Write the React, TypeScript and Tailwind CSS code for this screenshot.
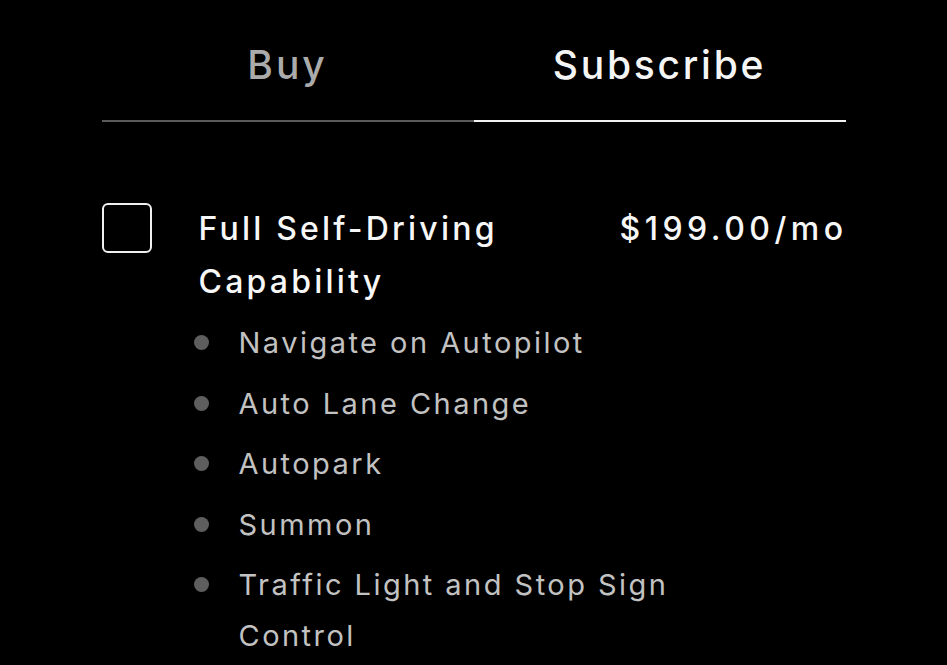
import React from "react";

const features = [
  "Navigate on Autopilot",
  "Auto Lane Change",
  "Autopark",
  "Summon",
  "Traffic Light and Stop Sign Control",
];

export default function App() {
  return (
    <div className="min-h-[665px] w-full bg-black font-['Inter',sans-serif] overflow-hidden">
      <div className="mx-auto w-[744px]">
        <div className="flex pt-[37px]">
          <div className="flex w-1/2 flex-col items-center">
            <div className="h-[56px] text-[39px] font-medium leading-[56px] tracking-[0.075em] text-[#ababab]">Buy</div>
            <div className="mt-[27px] h-[2px] w-full bg-[#5a5a5a]" />
          </div>
          <div className="flex w-1/2 flex-col items-center">
            <div className="h-[56px] text-[39px] font-medium leading-[56px] tracking-[0.07em] text-[#f5f5f5]">Subscribe</div>
            <div className="mt-[27px] h-[2px] w-full bg-[#f2f2f2]" />
          </div>
        </div>

        <div className="mt-[81px] flex">
          <div className="h-[50px] w-[50px] shrink-0 rounded-[6px] border-2 border-[#f0f0f0]" />
          <div className="ml-[47px] flex-1">
            <div className="flex justify-between">
              <div className="w-[400px] text-[32px] font-medium leading-[53px] tracking-[0.1em] text-[#f7f7f7] -mt-[1px]">
                Full Self-Driving Capability
              </div>
              <div className="text-[32px] font-medium leading-[53px] tracking-[0.14em] text-[#f7f7f7] -mt-[1px] -mr-[2px]">
                $199.00/mo
              </div>
            </div>
            <ul className="-ml-[5px] mt-[9px] flex flex-col gap-[9.5px]">
              {features.map((f) => (
                <li key={f} className="flex items-start">
                  <span className="mt-[18px] h-[15px] w-[15px] shrink-0 rounded-full bg-[#5e5e5e]" />
                  <span className="ml-[30px] w-[440px] text-[29px] leading-[51px] tracking-[0.085em] text-[#c2c2c2]">
                    {f}
                  </span>
                </li>
              ))}
            </ul>
          </div>
        </div>
      </div>
    </div>
  );
}
